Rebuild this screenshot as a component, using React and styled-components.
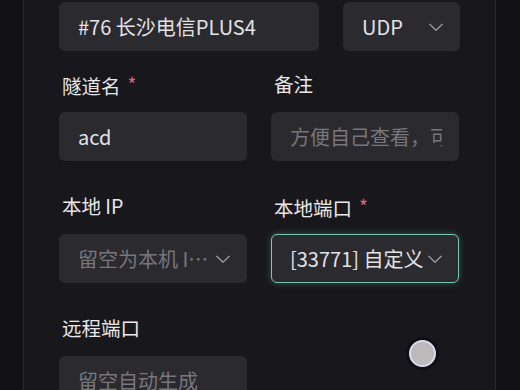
import React from "react";
import styled, { createGlobalStyle } from "styled-components";

const Global = createGlobalStyle`
  html, body {
    margin: 0;
    padding: 0;
    background: #111014;
    overflow: hidden;
  }
  body {
    font-family: "Noto Sans CJK SC", "Noto Sans", sans-serif;
  }
`;

const Page = styled.div`
  display: flex;
  width: 520px;
  height: 390px;
  background: #111014;
`;

const Side = styled.div`
  width: 23px;
  flex: none;
  background: #111014;
`;

const Panel = styled.div`
  position: relative;
  width: 473px;
  flex: none;
  box-sizing: border-box;
  padding: 2px 36px 0 35px;
  background: #18171c;
  border-left: 1px solid #28272c;
  border-right: 1px solid #28272c;
`;

const Row = styled.div`
  display: grid;
  grid-template-columns: ${(p) => p.$cols || "1fr 1fr"};
  column-gap: 24px;
  margin-bottom: ${(p) => p.$gap || 36}px;
`;

const Field = styled.div`
  display: flex;
  flex-direction: column;
  min-width: 0;
`;

const Label = styled.div`
  height: 24px;
  line-height: 24px;
  margin-top: -3px;
  margin-bottom: 16px;
  padding-left: 3px;
  font-size: 19.5px;
  color: #e8e7ea;
  white-space: nowrap;
`;

const Star = styled.span`
  color: #d4677b;
  font-size: 19px;
  margin-left: 7px;
  vertical-align: 2px;
`;

const Control = styled.div`
  display: flex;
  align-items: center;
  height: 49px;
  box-sizing: border-box;
  padding: 0 16px 0 18px;
  border-radius: 6px;
  background: #2b2a2f;
  border: 1px solid ${(p) => (p.$focus ? "#78c9ad" : "transparent")};
  box-shadow: ${(p) => (p.$focus ? "0 0 7px rgba(120, 201, 173, 0.35)" : "none")};
  overflow: hidden;
`;

const Value = styled.div`
  flex: 1;
  min-width: 0;
  font-size: 20px;
  color: ${(p) => (p.$placeholder ? "#77767c" : "#e3e2e6")};
  white-space: nowrap;
  overflow: hidden;
  text-overflow: ${(p) => (p.$ellipsis ? "ellipsis" : "clip")};
`;

const Chevron = styled.svg`
  flex: none;
  width: 14px;
  height: 14px;
  margin-left: 4px;
`;

const Knob = styled.div`
  position: absolute;
  left: 385px;
  top: 340px;
  width: 23px;
  height: 23px;
  border-radius: 50%;
  background: #bcb9bc;
  border: 2px solid #dcdaf0;
  box-shadow: 0 0 0 3px rgba(10, 10, 14, 0.6);
`;

const Arrow = () => (
  <Chevron viewBox="0 0 14 14" fill="none">
    <path d="M0.8 4.2 L7 10.2 L13.2 4.2" stroke="#9b9aa0" strokeWidth="1.3" strokeLinecap="round" strokeLinejoin="round" />
  </Chevron>
);

const Select = ({ value, placeholder, focus, ellipsis }) => (
  <Control $focus={focus}>
    <Value $placeholder={placeholder} $ellipsis={ellipsis}>{value}</Value>
    <Arrow />
  </Control>
);

const Input = ({ value, placeholder }) => (
  <Control>
    <Value $placeholder={placeholder}>{value}</Value>
  </Control>
);

export default function App() {
  return (
    <>
      <Global />
      <Page>
        <Side />
        <Panel>
          <Row $cols="260px 117px" $gap={24}>
            <Input value="#76 长沙电信PLUS4" />
            <Select value="UDP" />
          </Row>
          <Row>
            <Field>
              <Label>
                隧道名<Star>*</Star>
              </Label>
              <Input value="acd" />
            </Field>
            <Field>
              <Label>备注</Label>
              <Input placeholder value="方便自己查看，可选填写" />
            </Field>
          </Row>
          <Row>
            <Field>
              <Label>本地 IP</Label>
              <Select placeholder ellipsis value="留空为本机 IP 地址" />
            </Field>
            <Field>
              <Label>
                本地端口<Star>*</Star>
              </Label>
              <Select focus value="[33771] 自定义" />
            </Field>
          </Row>
          <Row>
            <Field>
              <Label>远程端口</Label>
              <Input placeholder value="留空自动生成" />
            </Field>
          </Row>
          <Knob />
        </Panel>
        <Side />
      </Page>
    </>
  );
}
